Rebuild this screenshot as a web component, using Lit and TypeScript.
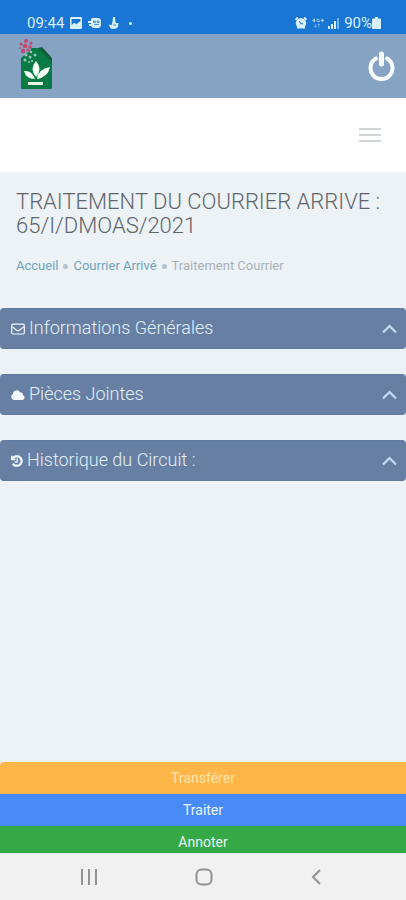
import { LitElement, html, svg, css, type TemplateResult } from "lit";
import { customElement, property } from "lit/decorators.js";

const icons: Record<string, TemplateResult> = {
  mail: svg`<svg viewBox="0 0 14 14" fill="none" stroke="currentColor" stroke-width="1.2"><rect x="0.7" y="2.2" width="12.6" height="9.8" rx="1.2"/><path d="M1 4.6 5.6 8.2Q7 9.2 8.4 8.2L13 4.6"/></svg>`,
  cloud: svg`<svg viewBox="0 0 14 14" fill="currentColor"><path d="M3.2 12A3.1 3.1 0 0 1 2 6.1 3.7 3.7 0 0 1 9 4.4 2.2 2.2 0 0 1 11.8 7 2.6 2.6 0 0 1 11.4 12Z"/></svg>`,
  history: svg`<svg viewBox="128 96 1600 1600" fill="currentColor" stroke="currentColor" stroke-width="60"><path d="M1664 896q0 156-61 298t-164 245-245 164-298 61q-172 0-327-72.500t-264-204.500q-7-10-6.500-22.500t8.500-20.500l137-138q10-9 25-9 16 2 23 12 73 95 179 147t225 52q104 0 198.500-40.500t163.500-109.500 109.500-163.500 40.500-198.500-40.500-198.500-109.500-163.500-163.500-109.500-198.500-40.500q-98 0-188 35.500t-160 101.500l137 138q31 30 14 69-17 40-59 40h-448q-26 0-45-19t-19-45v-448q0-42 40-59 39-17 69 14l130 129q107-101 244.500-156.500t284.500-55.500q156 0 298 61t245 164 164 245 61 298zm-640-288v448q0 14-9 23t-23 9h-320q-14 0-23-9t-9-23v-64q0-14 9-23t23-9h224v-352q0-14 9-23t23-9h64q14 0 23 9t9 23z"/></svg>`,
};

@customElement("status-bar")
class StatusBar extends LitElement {
  static styles = css`
    :host {
      display: flex;
      justify-content: space-between;
      align-items: flex-end;
      box-sizing: border-box;
      height: 34px;
      padding: 0 25px 2px 27px;
      background: #1976d5;
      color: #d8f0fb;
      font-size: 15px;
      line-height: 18px;
    }
    .group { display: flex; align-items: center; }
    .left { gap: 6px; }
    .right { gap: 4px; }
    svg { display: block; }
    .dot { width: 3px; height: 3px; margin-left: 3px; border-radius: 50%; background: currentColor; }
  `;
  render() {
    return html`
      <div class="group left">
        <span>09:44</span>
        <svg width="12" height="12" viewBox="0 0 12 12"><path fill="currentColor" fill-rule="evenodd" d="M1 0h10a1 1 0 0 1 1 1v10a1 1 0 0 1-1 1H1a1 1 0 0 1-1-1V1a1 1 0 0 1 1-1ZM1.600 2V8L4.300 5.700 6.500 7.300 10.400 4V2Z"/></svg>
        <svg width="14" height="12" viewBox="0 0 14 12"><path fill="currentColor" d="M4 1h7l2 2v6l-2 2H5L3 9H1V7h2V6H0V4h3V2Z"/><path d="M5.500 4h2v1.500h-2ZM9 4h2v1.500H9ZM6 7.500h5" fill="none" stroke="#1976d5" stroke-width=".7"/></svg>
        <svg width="12" height="12" viewBox="0 0 12 12"><path fill="currentColor" d="M5 0h2.200v4L8 6h2.600L9.800 10.600Q8 12 5.500 12 1.500 12 1 7.500L3.600 8 4.500 5Z"/><path d="m5.300 8 2.700.2" stroke="#1976d5" stroke-width=".8"/></svg>
        <span class="dot"></span>
      </div>
      <div class="group right">
        <svg width="12" height="12" viewBox="0 0 12 12"><path d="M.5 2.800 2.800.5M11.500 2.800 9.200.5M2.500 11.500l1-1.500M9.500 11.500l-1-1.500" stroke="currentColor" stroke-width="2"/><circle cx="6" cy="6.300" r="5.200" fill="currentColor"/><path d="M4.300 4.300 6 6.800h2" fill="none" stroke="#1976d5" stroke-width="1.100"/></svg>
        <svg width="13" height="12" viewBox="0 0 15 12" fill="none" stroke="currentColor" stroke-width="1"><path d="M4 5V1L2 3.600h3M9.500 2Q7 .5 7 3t2.500 1.500V3M13 1v4M11.200 3H15" opacity=".85"/><path d="M5 7v4M3.800 9.500 5 11l1.200-1.500M9 11V7M7.800 8.500 9 7l1.200 1.500" opacity=".5"/></svg>
        <svg width="12" height="12" viewBox="0 0 12 12" fill="currentColor"><path d="M0 9h2v3H0ZM3 7h2v5H3ZM6 4h2v8H6Z"/><path d="M9 1h2v11H9Z" opacity=".5"/></svg>
        <span class="group">90%<svg width="9" height="12" viewBox="0 0 9 12" fill="currentColor"><path d="M3 0h3v1.500h2q1 0 1 1V11q0 1-1 1H1q-1 0-1-1V2.500q0-1 1-1h2Z"/></svg></span>
      </div>`;
  }
}

@customElement("section-panel")
class SectionPanel extends LitElement {
  @property() icon = "mail";
  @property() label = "";
  static styles = css`
    :host { display: block; }
    .panel {
      display: flex;
      align-items: center;
      gap: 4px;
      width: 100%;
      height: 41px;
      padding: 0 9px 2px 11px;
      border: 1px solid #5f7ba2;
      border-width: 1px 0;
      border-radius: 4px;
      background: #677fa3;
      color: #e2f0fc;
      font: 300 18px/24px Roboto, sans-serif;
      text-align: left;
      cursor: pointer;
    }
    .icon { width: 14px; margin-top: 3px; color: #f2faff; }
    .icon.history { width: 12px; }
    .icon svg { display: block; width: 100%; }
    .label { flex: 1; }
    .chevron { display: block; margin-top: 2px; }
  `;
  render() {
    return html`<button class="panel" type="button">
      <span class="icon ${this.icon}">${icons[this.icon]}</span>
      <span class="label">${this.label}</span>
      <svg class="chevron" width="15" height="10" viewBox="0 0 15 10" fill="none" stroke="#c3dbf4" stroke-width="2.200"><path d="m1 8.500 6.500-6.500L14 8.500"/></svg>
    </button>`;
  }
}

@customElement("app-root")
class AppRoot extends LitElement {
  static styles = css`
    :host {
      display: flex;
      flex-direction: column;
      min-height: 100vh;
      background: #edf2f7;
      font-family: Roboto, sans-serif;
    }
    button { border: 0; padding: 0; background: none; font: inherit; cursor: pointer; }
    svg { display: block; }
    .brand {
      display: flex;
      justify-content: space-between;
      align-items: center;
      box-sizing: border-box;
      height: 64px;
      padding: 0 11px 4px 18px;
      background: #87a3c3;
    }
    .power { margin-top: 4px; }
    .menu {
      display: flex;
      justify-content: flex-end;
      align-items: center;
      height: 74px;
      padding-right: 25px;
      background: #fff;
    }
    .intro { padding: 18px 16px 0; }
    h1 { margin: 0; color: #5f666b; font-size: 22px; line-height: 24px; font-weight: 300; }
    .crumbs { display: flex; align-items: center; margin-top: 19px; color: #a9b1b8; font-size: 13px; line-height: 18px; }
    .crumbs a { color: #6ea5bb; text-decoration: none; }
    .bullet { width: 5px; height: 5px; margin: 0 5px; border-radius: 50%; background: #b4c4d0; }
    main { flex: 1; }
    .panels { display: grid; gap: 25px; margin: 33px 0 24px; }
    .actions { display: grid; }
    .action { height: 32px; color: #e9f4fa; font-size: 14px; line-height: 16px; }
    .transfer { border-top-left-radius: 4px; background: #ffb648; color: #ffe5ad; }
    .process { background: #488bf6; }
    .annotate { height: 27px; padding-top: 5px; background: #34a946; }
    .system {
      display: flex;
      justify-content: space-between;
      align-items: center;
      height: 47px;
      padding: 0 21% 0 20%;
      background: #f1f1f1;
      box-sizing: border-box;
    }
  `;
  render() {
    return html`
      <status-bar></status-bar>
      <header>
        <div class="brand">
          <svg width="34" height="52" viewBox="0 0 34 52" role="img" aria-label="Logo">
            <path d="M3 10h21l10 11v29q0 1-1 1H4q-1 0-1-1Z" fill="#087a43"/>
            <path d="m20 10 4-1 10 11v4Z" fill="#125d3c"/>
            <path d="M1 9h12v3L3 20H1Z" fill="#87a3c3"/>
            <g fill="#c8466f"><circle cx="8" cy="3" r="2"/><circle cx="3" cy="6" r="1.500"/><circle cx="7" cy="8" r="2.300"/><circle cx="13" cy="5" r="1.600"/><circle cx="12" cy="9" r="1.700"/><circle cx="5" cy="13" r="2.200"/><circle cx="2" cy="10" r="1"/><circle cx="10" cy="12" r="1.500"/></g>
            <g fill="#9ac7b8"><circle cx="13" cy="14" r="1.300"/><circle cx="17" cy="17" r="1.500"/><circle cx="8" cy="17" r="1.500"/><circle cx="12" cy="19" r="1.500"/><circle cx="7" cy="22" r="1.600"/><circle cx="14" cy="23" r="1.100"/><circle cx="11" cy="24" r="1"/></g>
            <path d="M18 23q-7 8 0 16 7-8 0-16ZM6 33q8-1 11 8Q8 41 6 33ZM32 29q-12 2-13 12 11-2 13-12Z" fill="#f4fff5"/>
            <path d="M10 44h15v3H10Z" fill="#e6f7e4"/>
          </svg>
          <button class="power" type="button" aria-label="Déconnexion">
            <svg width="27" height="31" viewBox="0 0 27 31" fill="none" stroke="#f8fcff" stroke-linecap="round"><path d="M8 7.500a11 11 0 1 0 11 0" stroke-width="4"/><path d="M13.500 3v10" stroke-width="5"/></svg>
          </button>
        </div>
        <div class="menu">
          <button type="button" aria-label="Menu">
            <svg width="22" height="16" viewBox="0 0 22 16" stroke="#d0d5d6" stroke-width="2"><path d="M0 2h22M0 8h22M0 14h22"/></svg>
          </button>
        </div>
      </header>
      <main>
        <div class="intro">
          <h1>TRAITEMENT DU COURRIER ARRIVE : 65/I/DMOAS/2021</h1>
          <nav class="crumbs">
            <a href="#accueil">Accueil</a><span class="bullet"></span>
            <a href="#courrier">Courrier Arrivé</a><span class="bullet"></span>
            <span>Traitement Courrier</span>
          </nav>
        </div>
        <div class="panels">
          <section-panel icon="mail" label="Informations Générales"></section-panel>
          <section-panel icon="cloud" label="Pièces Jointes"></section-panel>
          <section-panel icon="history" label="Historique du Circuit :"></section-panel>
        </div>
      </main>
      <div class="actions">
        <button class="action transfer" type="button">Transférer</button>
        <button class="action process" type="button">Traiter</button>
        <button class="action annotate" type="button">Annoter</button>
      </div>
      <nav class="system">
        <button type="button" aria-label="Applications récentes"><svg width="16" height="16" viewBox="0 0 16 16" stroke="#929292" stroke-width="2"><path d="M1 0v16M8 0v16M15 0v16"/></svg></button>
        <button type="button" aria-label="Écran d'accueil"><svg width="18" height="18" viewBox="0 0 18 18" fill="none" stroke="#929292" stroke-width="2"><rect x="1.500" y="1.500" width="15" height="15" rx="5"/></svg></button>
        <button type="button" aria-label="Retour"><svg width="10" height="16" viewBox="0 0 10 16" fill="none" stroke="#929292" stroke-width="2"><path d="M9 1 2 8l7 7"/></svg></button>
      </nav>`;
  }
}
